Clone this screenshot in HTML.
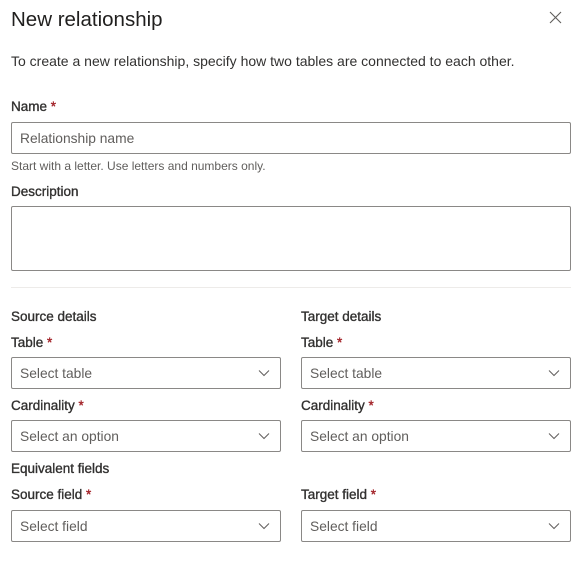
<!DOCTYPE html>
<html><head><style>
*{box-sizing:border-box;margin:0;padding:0}
body{width:582px;height:566px;background:#fff;font-family:"Liberation Sans",sans-serif;color:#323130;position:relative;overflow:hidden}
.a{position:absolute}
.t{font-size:20.5px;font-weight:400;color:#201f1e}
.p{font-size:14px;color:#323130}
.l{font-size:13.5px;font-weight:400;-webkit-text-stroke:0.35px #323130;color:#323130}
.r{color:#a4262c;-webkit-text-stroke:0.35px #a4262c}
.box{border:1px solid #8a8886;border-radius:2px;background:#fff}
.ph{font-size:13.8px;color:#605e5c;padding-left:8px;line-height:31px}
.h{font-size:12px;color:#605e5c}
.chev{position:absolute;right:10px;top:11px}
</style></head><body>
<div class="a t" style="left:11px;top:8px">New relationship</div>
<svg class="a" style="left:549px;top:11px" width="13" height="13" viewBox="0 0 13 13"><path d="M1 1L12 12M12 1L1 12" stroke="#605e5c" stroke-width="1.1" fill="none"/></svg>
<div class="a p" style="left:11px;top:53px">To create a new relationship, specify how two tables are connected to each other.</div>
<div class="a l" style="left:11px;top:99px">Name <span class="r">*</span></div>
<div class="a box ph" style="left:11px;top:122px;width:560px;height:32px">Relationship name</div>
<div class="a h" style="left:11px;top:159px">Start with a letter. Use letters and numbers only.</div>
<div class="a l" style="left:11px;top:184px">Description</div>
<div class="a box" style="left:11px;top:206px;width:560px;height:65px"></div>
<div class="a" style="left:11px;top:287px;width:560px;height:1px;background:#edebe9"></div>

<div class="a l" style="left:11px;top:309px">Source details</div>
<div class="a l" style="left:301px;top:309px">Target details</div>
<div class="a l" style="left:11px;top:335px">Table <span class="r">*</span></div>
<div class="a l" style="left:301px;top:335px">Table <span class="r">*</span></div>
<div class="a box ph" style="left:11px;top:357px;width:270px;height:32px">Select table<svg class="chev" width="12" height="8" viewBox="0 0 12 8"><path d="M1 1.5L6 6.5L11 1.5" stroke="#605e5c" fill="none"/></svg></div>
<div class="a box ph" style="left:301px;top:357px;width:270px;height:32px">Select table<svg class="chev" width="12" height="8" viewBox="0 0 12 8"><path d="M1 1.5L6 6.5L11 1.5" stroke="#605e5c" fill="none"/></svg></div>
<div class="a l" style="left:11px;top:398px">Cardinality <span class="r">*</span></div>
<div class="a l" style="left:301px;top:398px">Cardinality <span class="r">*</span></div>
<div class="a box ph" style="left:11px;top:420px;width:270px;height:32px">Select an option<svg class="chev" width="12" height="8" viewBox="0 0 12 8"><path d="M1 1.5L6 6.5L11 1.5" stroke="#605e5c" fill="none"/></svg></div>
<div class="a box ph" style="left:301px;top:420px;width:270px;height:32px">Select an option<svg class="chev" width="12" height="8" viewBox="0 0 12 8"><path d="M1 1.5L6 6.5L11 1.5" stroke="#605e5c" fill="none"/></svg></div>
<div class="a l" style="left:11px;top:461px">Equivalent fields</div>
<div class="a l" style="left:11px;top:487px">Source field <span class="r">*</span></div>
<div class="a l" style="left:301px;top:487px">Target field <span class="r">*</span></div>
<div class="a box ph" style="left:11px;top:510px;width:270px;height:32px">Select field<svg class="chev" width="12" height="8" viewBox="0 0 12 8"><path d="M1 1.5L6 6.5L11 1.5" stroke="#605e5c" fill="none"/></svg></div>
<div class="a box ph" style="left:301px;top:510px;width:270px;height:32px">Select field<svg class="chev" width="12" height="8" viewBox="0 0 12 8"><path d="M1 1.5L6 6.5L11 1.5" stroke="#605e5c" fill="none"/></svg></div>
</body></html>
